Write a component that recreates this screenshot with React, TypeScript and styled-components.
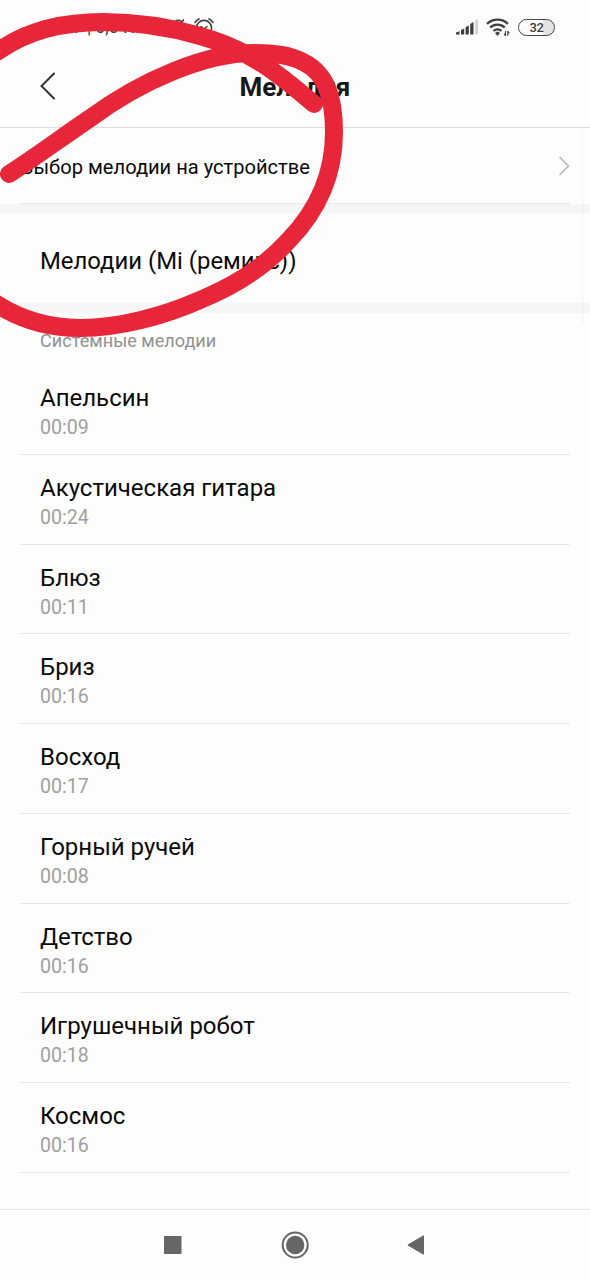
import React from "react";
import styled, { createGlobalStyle } from "styled-components";

const GlobalStyle = createGlobalStyle`
  * { box-sizing: border-box; }
  body { margin: 0; background: #fdfdfd; font-family: Roboto, "Noto Sans", sans-serif; }
`;

const Screen = styled.div`
  position: relative;
  width: 590px;
  height: 1280px;
  display: flex;
  flex-direction: column;
  overflow: hidden;
  background: #fdfdfd;
  color: #0b0b0b;
`;

const StatusBar = styled.div`
  height: 46px;
  flex: none;
  display: flex;
  justify-content: space-between;
  padding: 0 35px 0 39px;
  color: #3c3c3c;
`;

const StatusGroup = styled.div<{ $gap: number }>`
  display: flex;
  align-items: center;
  gap: ${(p) => p.$gap}px;
  height: 54px;
`;

const StatusText = styled.span`
  width: 113px;
  font-size: 17.5px;
  line-height: 22px;
  white-space: nowrap;
`;

const Battery = styled.div`
  width: 37px;
  height: 17px;
  border: 1.5px solid #444;
  border-radius: 9px;
  background: linear-gradient(to right, transparent 68%, #e4e4e4 68%);
  font: 500 13px/15px Roboto, sans-serif;
  letter-spacing: -0.4px;
  text-align: center;
`;

const Header = styled.header`
  height: 82px;
  flex: none;
  display: grid;
  grid-template-columns: 64px 1fr 64px;
  align-items: center;
  border-bottom: 1px solid #dedede;

  svg { margin: 0 0 1px 38px; }
`;

const Title = styled.h1`
  margin: 0;
  font-size: 26px;
  line-height: 32px;
  font-weight: 700;
  text-align: center;
  color: #171717;
`;

const Picker = styled.div`
  height: 76px;
  flex: none;
  margin: 0 20px;
  padding: 0 0 0 1px;
  display: flex;
  align-items: center;
  justify-content: space-between;
  border-bottom: 1px solid #e9e9e9;
  font-size: 20.1px;

  span { padding-top: 3px; }
`;

const Band = styled.div`
  height: 10px;
  flex: none;
  background: #f6f6f6;
`;

const Current = styled.div`
  height: 89px;
  flex: none;
  display: flex;
  align-items: center;
  padding: 5px 40px 0;
  font-size: 23.9px;
`;

const SectionLabel = styled.div`
  height: 52px;
  flex: none;
  padding: 15px 40px 0;
  font-size: 18.1px;
  line-height: 26px;
  color: #929292;
`;

const Row = styled.div`
  height: 89.75px;
  flex: none;
  margin: 0 20px;
  padding: 17px 20px 0;
  border-bottom: 1px solid #e7e7e7;
`;

const Name = styled.div`
  font-size: 24px;
  line-height: 32px;
`;

const Duration = styled.div`
  font-size: 19.6px;
  line-height: 28px;
  color: #a0a0a0;
`;

const NavBar = styled.nav`
  height: 71px;
  flex: none;
  margin-top: auto;
  padding: 0 165px 0 164px;
  display: flex;
  justify-content: space-between;
  align-items: center;
  border-top: 1px solid #e5e5e5;
`;

const ScrollTrack = styled.div`
  position: absolute;
  left: 581px;
  top: 128px;
  width: 3px;
  height: 196px;
  background: rgba(0, 0, 0, 0.016);
`;

const Marker = styled.svg`
  position: absolute;
  left: 0;
  top: 0;
`;

const melodies = [
  ["Апельсин", "00:09"],
  ["Акустическая гитара", "00:24"],
  ["Блюз", "00:11"],
  ["Бриз", "00:16"],
  ["Восход", "00:17"],
  ["Горный ручей", "00:08"],
  ["Детство", "00:16"],
  ["Игрушечный робот", "00:18"],
  ["Космос", "00:16"],
];

const MutedBell = () => (
  <svg width="24" height="24" viewBox="0 0 24 24" fill="none" stroke="#444" strokeWidth="1.6" strokeLinecap="round">
    <path d="M13 10Q15 4 20 5.500Q22 6.500 23 9M15 16 24 4.500M11 19h12" />
  </svg>
);

const AlarmClock = () => (
  <svg width="24" height="24" viewBox="0 0 24 24" fill="none" stroke="#444" strokeWidth="1.6" strokeLinecap="round">
    <circle cx="12" cy="13" r="7.600" />
    <path d="M3 7.500Q4.500 5 7 3.900M17 3.900Q19.500 5 21 7.500M9 11.500l3 2.500 3-2.500" />
  </svg>
);

const Signal = () => (
  <svg width="22" height="16" viewBox="0 0 22 16" fill="#3f3f3f">
    <path d="M0 15.500v-2l3.500-1.200v3.200zM5 11l3.200-1.400v5.900H5zM9.600 8l3.200-1.500v9H9.600zM14.200 5l3.300-2v12.500h-3.300z" />
    <path d="M19.200 1.500 22 0v15.500h-2.800z" fill="#d2d2d2" />
  </svg>
);

const Wifi = () => (
  <svg width="24" height="20" viewBox="0 0 24 20" fill="none" stroke="#3f3f3f" strokeWidth="2.300">
    <path d="M1 6.800a15.500 15.500 0 0 1 21 0M4.200 10.500a10.600 10.600 0 0 1 14.600 0M7.500 14a6 6 0 0 1 8 0" />
    <path d="m9 16 2.500-1.500L14 16l-2.500 3z" fill="#3f3f3f" stroke="none" />
    <path d="M19.500 14v5M21.800 14v5M18 16.500l1.500 2.500M21.800 14l1.500 2.500" strokeWidth="1.100" />
  </svg>
);

export default function App() {
  return (
    <>
      <GlobalStyle />
      <Screen>
        <StatusBar>
          <StatusGroup $gap={8}>
            <StatusText>11:17 | 0,0 К</StatusText>
            <MutedBell />
            <AlarmClock />
          </StatusGroup>
          <StatusGroup $gap={8}>
            <Signal />
            <Wifi />
            <Battery>32</Battery>
          </StatusGroup>
        </StatusBar>
        <Header>
          <svg width="20" height="30" viewBox="0 0 20 30" fill="none" stroke="#333" strokeWidth="2" strokeLinecap="round">
            <path d="M16 2.500 3.500 15 16 27.500" />
          </svg>
          <Title>Мелодия</Title>
        </Header>
        <Picker>
          <span>Выбор мелодии на устройстве</span>
          <svg width="12" height="20" viewBox="0 0 12 20" fill="none" stroke="#b9b9b9" strokeWidth="1.600">
            <path d="M1.500 1 10.500 10 1.500 19" />
          </svg>
        </Picker>
        <Band />
        <Current>Мелодии (Mi (ремикс))</Current>
        <Band />
        <SectionLabel>Системные мелодии</SectionLabel>
        {melodies.map(([name, time]) => (
          <Row key={name}>
            <Name>{name}</Name>
            <Duration>{time}</Duration>
          </Row>
        ))}
        <NavBar>
          <svg width="18" height="18">
            <rect width="17.500" height="18" rx="0.800" fill="#666" />
          </svg>
          <svg width="28" height="28" viewBox="0 0 28 28">
            <circle cx="14.200" cy="14" r="12.500" fill="none" stroke="#666" strokeWidth="2" />
            <circle cx="14.200" cy="14" r="9.200" fill="#666" />
          </svg>
          <svg width="18" height="20" viewBox="0 0 18 20">
            <path d="M16.500 0.800v18.400L0.900 10z" fill="#666" stroke="#666" strokeLinejoin="round" />
          </svg>
        </NavBar>
        <ScrollTrack />
        <Marker width="590" height="350" viewBox="0 0 590 350" fill="none" stroke="#e72739" strokeWidth="18" strokeLinecap="round" strokeLinejoin="round">
          <path d="M9 174C34 158 61 138 89 119C143 79 207 53 253 53C275 53 290 55 303 62C326 73 334 97 334 132C334 178 316 212 289 240C263 269 232 287 200 300C164 316 119 328 80 328C50 328 22 320 -2 305C-90 245 -85 95 0 50C30 29 68 22 103 22C140 22 176 29 200 36C249 49 280 75 314 104" />
        </Marker>
      </Screen>
    </>
  );
}
